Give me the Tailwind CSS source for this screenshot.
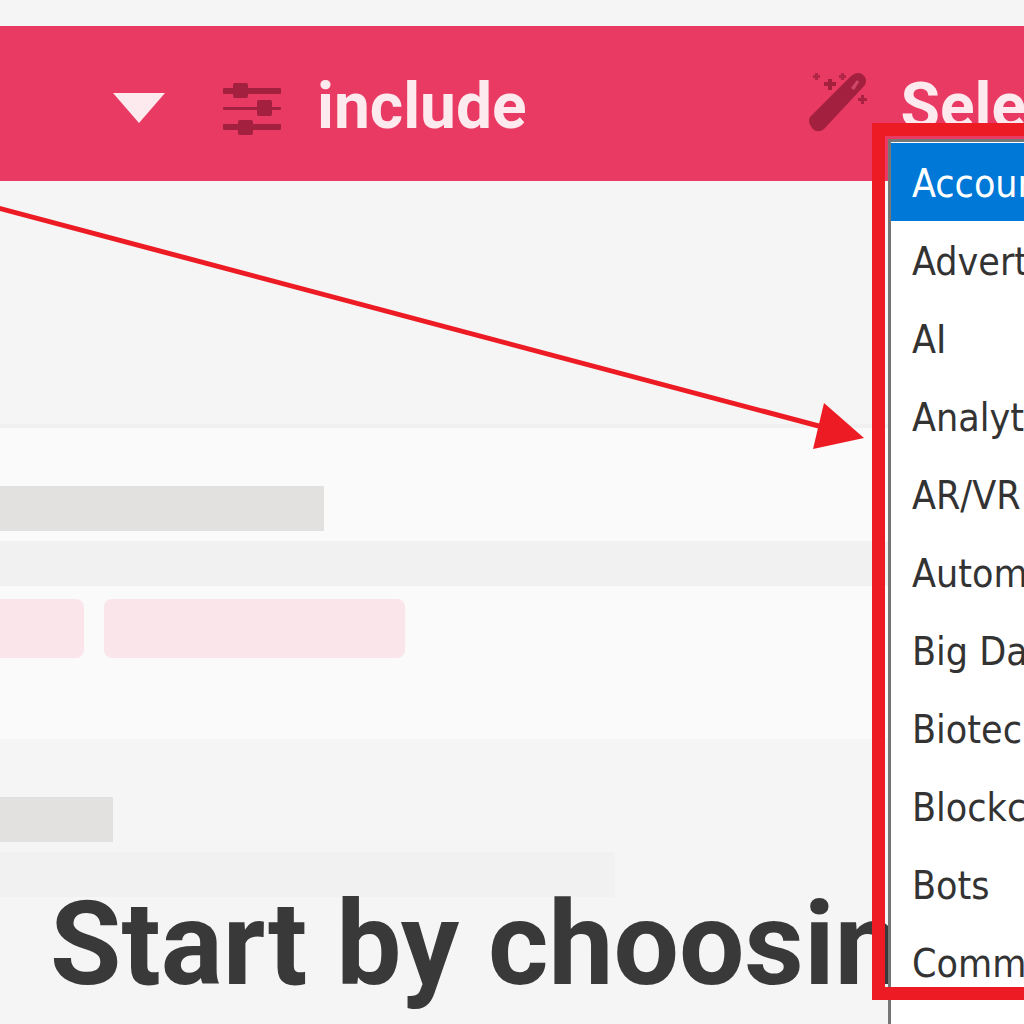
<!DOCTYPE html>
<html lang="en">
<head>
  <meta charset="UTF-8">
  <title>Start by choosing</title>
  <script src="https://cdn.jsdelivr.net/npm/@tailwindcss/browser@4"></script>
</head>
<body class="relative w-[1024px] h-[1024px] overflow-hidden bg-[#f5f5f5] font-['Roboto',sans-serif]">

  <!-- header -->
  <div class="mt-[26px] h-[155px] bg-[#e93a63] flex items-center pl-[113px] whitespace-nowrap overflow-hidden">
    <svg class="w-[52px] h-[30px] mt-[8px] shrink-0" viewBox="0 0 52 30"><polygon points="0,0 52,0 26,30" fill="#fdeaef"/></svg>
    <svg class="ml-[57px] w-[60px] h-[54px] mt-[11px] shrink-0" viewBox="0 0 60 54" fill="#a3203f">
      <rect x="1" y="6" width="58" height="6" rx="1"/>
      <rect x="11" y="1" width="15" height="15" rx="2"/>
      <rect x="1" y="25" width="58" height="3" rx="1"/>
      <rect x="35" y="18" width="15" height="16" rx="2"/>
      <rect x="1" y="42" width="58" height="6" rx="1"/>
      <rect x="16" y="38" width="15" height="15" rx="2"/>
    </svg>
    <span class="ml-[35px] mt-[6px] text-[64px] font-bold leading-none text-[#fdeaef]">include</span>
    <svg class="ml-[282px] w-[62px] h-[62px] mt-[-4px] shrink-0" viewBox="0 0 62 62" fill="#a3203f">
      <path d="M1 46 L40 7 Q47 0 53 3 Q59 7 56 14 L15 58 Q10 62 5 59 Q-2 52 1 46Z"/>
      <path d="M42 17 L48 9 L50 11 L45 19Z" fill="#d0496c"/>
      <path d="M19 8 H23 V11 H27 V15 H23 V19 H19 V15 H15 V11 H19Z"/>
      <path d="M6 2 H9 V4 H11 V7 H9 V9 H6 V7 H4 V4 H6Z" opacity="0.8"/>
      <path d="M32 2 H35 V4 H37 V7 H35 V9 H32 V7 H30 V4 H32Z" opacity="0.8"/>
      <path d="M52 24 H55 V27 H58 V30 H55 V33 H52 V30 H49 V27 H52Z" opacity="0.9"/>
    </svg>
    <span class="ml-[30px] mt-[6px] text-[64px] font-bold leading-none text-[#fdeaef]">Select</span>
  </div>

  <!-- skeleton panel -->
  <div class="mt-[243px] h-[315px] bg-[#fafafa] border-t-4 border-[#f0f0f0] pt-[58px]">
    <div class="w-[324px] h-[45px] bg-[#e2e1df]"></div>
    <div class="mt-[10px] w-full h-[45px] bg-[#f1f1f1]"></div>
    <div class="mt-[13px] flex gap-[20px]">
      <div class="w-[84px] h-[59px] bg-[#f9e5ea] rounded-r-lg"></div>
      <div class="w-[301px] h-[59px] bg-[#f9e5ea] rounded-lg"></div>
    </div>
  </div>
  <div class="mt-[58px] w-[113px] h-[45px] bg-[#e2e1df]"></div>
  <div class="mt-[10px] w-[615px] h-[45px] bg-[#f1f1f1]"></div>

  <!-- heading over skeleton -->
  <h1 class="absolute left-[50px] top-[875px] text-[116px] font-bold leading-[1.2] text-[#393939] whitespace-nowrap">Start by choosing</h1>

  <!-- open select list -->
  <div class="absolute left-[888px] top-[139px] w-[200px] h-[900px] bg-white border-[3px] border-[#767676] border-b-0 pt-px font-['DejaVu_Sans_Condensed','DejaVu_Sans',sans-serif] text-[39px] text-[#333] whitespace-nowrap">
    <div class="h-[78px] leading-[82px] pl-[21px] bg-[#0078d7] text-white">Accounting</div>
    <div class="h-[78px] leading-[82px] pl-[21px]">Advertising</div>
    <div class="h-[78px] leading-[82px] pl-[21px]">AI</div>
    <div class="h-[78px] leading-[82px] pl-[21px]">Analytics</div>
    <div class="h-[78px] leading-[82px] pl-[21px]">AR/VR</div>
    <div class="h-[78px] leading-[82px] pl-[21px]">Automation</div>
    <div class="h-[78px] leading-[82px] pl-[21px]">Big Data</div>
    <div class="h-[78px] leading-[82px] pl-[21px]">Biotech</div>
    <div class="h-[78px] leading-[82px] pl-[21px]">Blockchain</div>
    <div class="h-[78px] leading-[82px] pl-[21px]">Bots</div>
    <div class="h-[78px] leading-[82px] pl-[21px]">Commerce</div>
    <div class="h-[78px] leading-[82px] pl-[21px]">Crowdfunding</div>
  </div>

  <!-- red annotation -->
  <div class="absolute left-[872px] top-[123px] w-[200px] h-[877px] border-[13px] border-[#ed1c24]"></div>
  <svg class="absolute left-0 top-0 w-[1024px] h-[1024px] pointer-events-none" viewBox="0 0 1024 1024">
    <line x1="-2" y1="208" x2="830" y2="429" stroke="#ed1c24" stroke-width="5"/>
    <polygon points="864,438 824,403 813,449" fill="#ed1c24"/>
  </svg>
</body>
</html>
